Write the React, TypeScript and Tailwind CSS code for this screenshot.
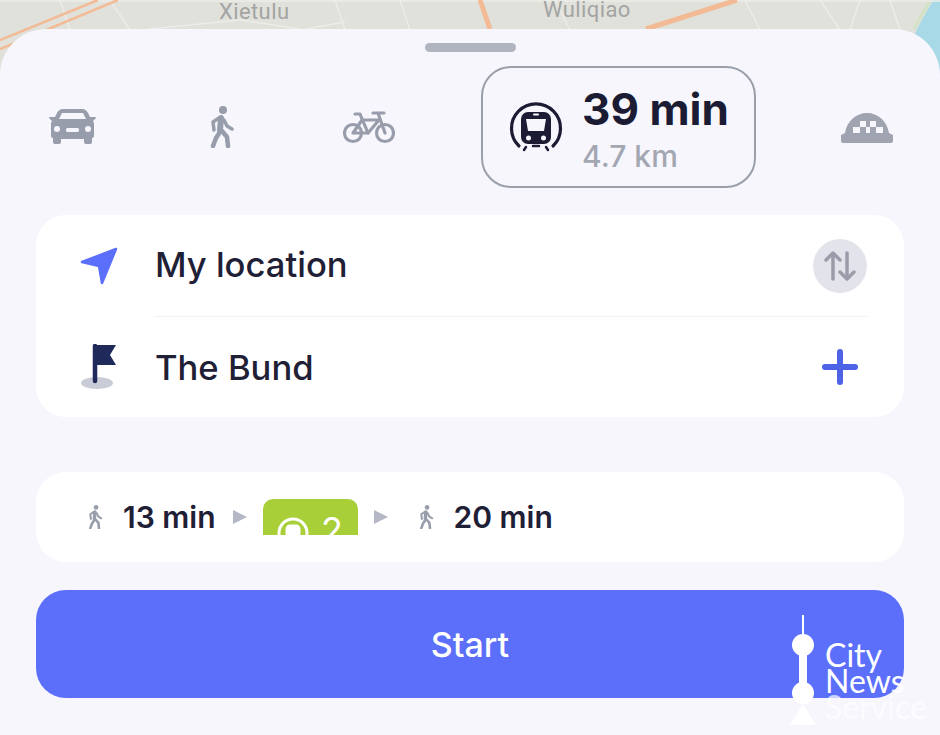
const CarIcon = () => (
  <svg width="47" height="36" viewBox="0 0 47 36">
    <path
      fill="#989dab"
      d="M14 0H33C36 0 38 2 39 4L41 8H46Q47 8 47 9L44 12L45 14V27Q45 29 43 29V33Q43 35 41 35H37Q35 35 35 33V30H12V33Q12 35 10 35H6Q4 35 4 33V29Q2 29 2 27V14L3 12L0 9Q0 8 1 8H6L8 4C9 2 11 0 14 0Z"
    />
    <path fill="#f7f6fd" d="M13 4H34L37 10H10Z" />
    <circle cx="8" cy="20" r="3" fill="#f7f6fd" />
    <circle cx="39" cy="20" r="3" fill="#f7f6fd" />
    <rect x="17" y="19" width="13" height="4" rx="1.5" fill="#f7f6fd" />
  </svg>
);

const WalkIcon = ({ size = 26, color = "#989dab" }: { size?: number; color?: string }) => (
  <svg width={size} height={size * 1.62} viewBox="0 0 26 42" fill="none" stroke={color} strokeLinecap="round" strokeLinejoin="round">
    <circle cx="14" cy="4" r="4" fill={color} stroke="none" />
    <path strokeWidth="6" d="M12 12L11 24" />
    <path strokeWidth="3.5" d="M10 12L4 16L5 24" />
    <path strokeWidth="3.5" d="M15 14L18 20L23 23" />
    <path strokeWidth="4.5" d="M11 26L7 32L4 40" />
    <path strokeWidth="4.5" d="M13 25L18 31L19 40" />
  </svg>
);

const BikeIcon = () => (
  <svg width="52" height="34" viewBox="0 0 52 34" fill="none" stroke="#989dab" strokeWidth="3.2" strokeLinecap="round" strokeLinejoin="round">
    <circle cx="10" cy="23" r="8.5" />
    <circle cx="42" cy="23" r="8.5" />
    <path d="M10 23L19 10H36L25 23H10" />
    <path d="M12 4H17L25 23" />
    <path d="M30 3H41M35 3L42 23" />
  </svg>
);

const TrainIcon = () => (
  <svg width="54" height="50" viewBox="0 0 54 50" fill="none">
    <path d="M10 44A24.5 24.5 0 1 1 44 44" stroke="#1b1c33" strokeWidth="3.2" strokeLinecap="round" />
    <rect x="12" y="10" width="30" height="32" rx="7" fill="#1b1c33" />
    <path d="M17 17H37L35 29H19Z" fill="#f7f6fd" />
    <rect x="24" y="11.5" width="6" height="2" rx="1" fill="#f7f6fd" />
    <circle cx="19.5" cy="36" r="2.5" fill="#f7f6fd" />
    <circle cx="34.5" cy="36" r="2.5" fill="#f7f6fd" />
    <path d="M17 45L15 48M37 45L39 48M24 44H30" stroke="#1b1c33" strokeWidth="2.5" strokeLinecap="round" />
  </svg>
);

const TaxiIcon = () => (
  <svg width="52" height="31" viewBox="0 0 52 31">
    <path
      fill="#a0a4b0"
      d="M4 21C6 9 15 1 26 1C37 1 46 9 48 21L52 23V29Q52 31 50 31H2Q0 31 0 29V23Z"
    />
    <path
      fill="#f7f6fd"
      d="M19 9H25V15H19ZM29 9H35V15H29ZM12 15H19V21H12ZM25 15H29V21H25ZM35 15H42V21H35Z"
    />
  </svg>
);

const Arrow = () => (
  <svg width="14" height="16" viewBox="0 0 14 16">
    <path d="M0 1L14 8L0 15Z" fill="#b4b7c6" />
  </svg>
);

export default function App() {
  return (
    <div className="relative h-[735px] w-[940px] overflow-hidden bg-[#e0e0da] font-['Inter',sans-serif]">
      {/* map peeking out behind the sheet */}
      <svg className="absolute left-0 top-0" width="940" height="90" viewBox="0 0 940 90" fill="none">
        <rect width="940" height="90" fill="#e1e1db" />
        <path d="M933 0L917 29L905 60V90H940V0Z" fill="#a8d9e6" />
        <path d="M930 0L914 29" stroke="#d3e2c4" strokeWidth="3" />
        <g stroke="#ecece8" strokeWidth="1.5">
          <path d="M0 1H940" />
          <path d="M60 0L70 30M110 0L130 30M300 30L345 22M150 29L240 20L300 29M335 0L345 30" />
          <path d="M400 0L410 30M555 0L570 30M745 0L760 30M820 0L840 30M860 0L850 30M890 0L900 30" />
        </g>
        <g stroke="#f3bb95" strokeWidth="2.5">
          <path d="M0 40L98 0" />
          <path d="M0 49L118 0" />
          <path d="M646 29L737 0" strokeWidth="5" />
          <path d="M480 0L490 29" strokeWidth="5" />
        </g>
      </svg>
      <span className="absolute left-[219px] top-0 font-['Roboto',sans-serif] text-[22px] leading-[24px] tracking-[0.4px] text-[#a3a4a3]">
        Xietulu
      </span>
      <span className="absolute left-[543px] top-0 font-['Roboto',sans-serif] text-[22px] leading-[20px] tracking-[0.4px] text-[#a3a4a3]">
        Wuliqiao
      </span>

      {/* bottom sheet */}
      <div className="relative mt-[29px] flex h-[706px] flex-col rounded-t-[46px] bg-[#f7f6fd] px-[36px]">
        <div className="mx-auto mt-[14px] h-[9px] w-[91px] rounded-full bg-[#b0b5c0]" />

        <div className="mt-[14px] flex h-[122px] items-center">
          <div className="ml-[13px]">
            <CarIcon />
          </div>
          <div className="ml-[113px]">
            <WalkIcon />
          </div>
          <div className="ml-[108px]">
            <BikeIcon />
          </div>
          <div className="ml-[86px] flex h-[122px] w-[275px] items-center rounded-[30px] border-2 border-[#9a9fa9] pl-[26px]">
            <TrainIcon />
            <div className="ml-[19px] flex flex-col pt-[4px]">
              <span className="text-[44px] font-bold leading-[50px] text-[#1b1c33]">39 min</span>
              <span className="mt-[4px] text-[30px] font-medium leading-[36px] text-[#a3a7b2]">4.7 km</span>
            </div>
          </div>
          <div className="ml-[85px]">
            <TaxiIcon />
          </div>
        </div>

        {/* from / to */}
        <div className="mt-[27px] flex h-[202px] flex-col rounded-[30px] bg-white pl-[44px] pr-[37px]">
          <div className="flex h-[102px] items-center">
            <div className="flex w-[75px] shrink-0">
              <svg width="38" height="38" viewBox="0 0 38 38">
                <path d="M36 2L2 15L19 19L22 36Z" fill="#5b6ffb" stroke="#5b6ffb" strokeWidth="2.5" strokeLinejoin="round" />
              </svg>
            </div>
            <div className="flex h-full flex-1 items-center border-b border-[#f0f0f4]">
              <span className="mb-[3px] flex-1 text-[34.6px] font-medium leading-[40px] text-[#1f2036]">My location</span>
              <div className="flex size-[54px] items-center justify-center rounded-full bg-[#e3e3ec]">
                <svg width="32" height="32" viewBox="0 0 32 32" fill="none" stroke="#9a9da9" strokeWidth="3.5" strokeLinecap="round" strokeLinejoin="round">
                  <path d="M9 29V3M2 10L9 3L16 10" />
                  <path d="M23 3V29M16 22L23 29L30 22" />
                </svg>
              </div>
            </div>
          </div>
          <div className="flex h-[100px] items-center">
            <div className="flex w-[75px] shrink-0">
              <svg width="36" height="46" viewBox="0 0 36 46">
                <ellipse cx="17" cy="39" rx="16" ry="6" fill="#c9cbd6" />
                <path d="M15 2V37" stroke="#1f2a5a" strokeWidth="4.5" strokeLinecap="round" />
                <path d="M13 1H36L30 11L36 21H13Z" fill="#1f2a5a" />
              </svg>
            </div>
            <span className="mb-[1px] flex-1 text-[34.6px] font-medium leading-[40px] text-[#1f2036]">The Bund</span>
            <div className="flex size-[54px] items-center justify-center">
              <svg width="36" height="36" viewBox="0 0 36 36" fill="none" stroke="#4f63e7" strokeWidth="6" strokeLinecap="round">
                <path d="M18 3V33M3 18H33" />
              </svg>
            </div>
          </div>
        </div>

        {/* route summary */}
        <div className="mt-[55px] flex h-[90px] items-center rounded-[30px] bg-white pl-[52px]">
          <WalkIcon size={15} color="#989dab" />
          <span className="mb-[1px] ml-[20px] text-[30px] font-semibold leading-[34px] text-[#1f2036]">13 min</span>
          <div className="ml-[17px]">
            <Arrow />
          </div>
          <div className="ml-[16px] flex h-[36px] w-[95px] items-start justify-center gap-[12px] overflow-hidden rounded-t-[10px] bg-[#a9cf38] pt-[18px]">
            <svg width="32" height="32" viewBox="0 0 32 32" fill="none" stroke="white" strokeWidth="3" className="shrink-0">
              <circle cx="16" cy="16" r="14" />
              <rect x="10" y="9" width="12" height="14" rx="3" fill="white" />
            </svg>
            <span className="mt-[-5px] text-[36px] leading-[36px] text-white">2</span>
          </div>
          <div className="ml-[16px]">
            <Arrow />
          </div>
          <div className="ml-[31px]">
            <WalkIcon size={15} color="#989dab" />
          </div>
          <span className="mb-[1px] ml-[20px] text-[30px] font-semibold leading-[34px] text-[#1f2036]">20 min</span>
        </div>

        <button className="mt-[28px] h-[108px] w-full rounded-[30px] bg-[#5b6ffb] text-[34px] font-medium text-white">
          Start
        </button>
      </div>

      {/* watermark */}
      <div className="absolute left-[788px] top-[614px] flex">
        <svg width="30" height="112" viewBox="0 0 30 112" fill="white">
          <rect x="14" y="1" width="2" height="24" />
          <circle cx="15" cy="31" r="11" />
          <rect x="11" y="30" width="8" height="50" />
          <circle cx="15" cy="79" r="11" />
          <path d="M15 90L28 111H2Z" />
        </svg>
        <div className="ml-[7px] mt-[28px] flex flex-col font-['Lato',sans-serif] text-[32px] leading-[26px] text-white">
          <span>City</span>
          <span>News</span>
          <span className="opacity-70">Service</span>
        </div>
      </div>
    </div>
  );
}
